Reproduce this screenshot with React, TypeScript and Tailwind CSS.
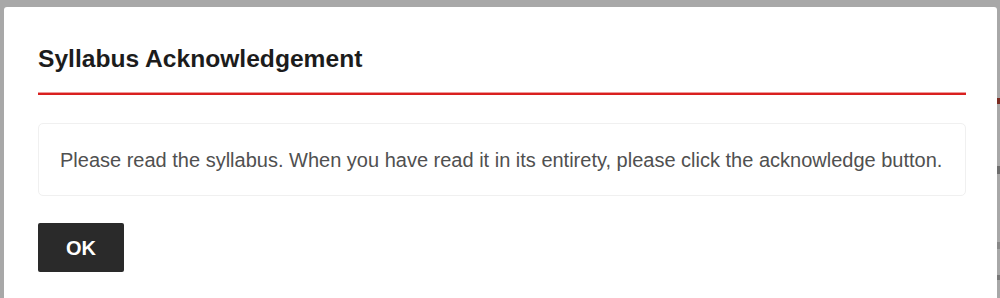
import React from "react";

export default function App() {
  return (
    <div className="w-[1000px] h-[298px] bg-[#a8a8a8] overflow-hidden flex pt-[7px] pl-[4px]" style={{ fontFamily: '"Liberation Sans", Arial, sans-serif' }}>
      <div className="flex-1 bg-white rounded-tl-[3px] rounded-tr-[3px] pl-[34px] pr-[31px] pt-[37px]">
        <h2 className="text-[24.6px] leading-[30px] font-bold text-[#1c1c1c]">Syllabus Acknowledgement</h2>
        <div className="mt-[18px] h-[3px] bg-[#d9201f] border-t border-[#ef9a9a]" />
        <div className="mt-[28px] border border-[#f0f0f0] rounded-[5px] h-[73px] flex items-center pl-[21px]">
          <p className="text-[20px] text-[#505050] leading-none">Please read the syllabus. When you have read it in its entirety, please click the acknowledge button.</p>
        </div>
        <button className="mt-[27px] w-[86px] h-[49px] bg-[#2a2a2a] rounded-[2px] text-white font-bold text-[20px] flex items-center justify-center">OK</button>
      </div>
      <div className="w-[3px] flex flex-col">
        <div className="h-[91px]" />
        <div className="h-[6px] bg-[#7a2a20]" />
        <div className="h-[62px]" />
        <div className="h-[8px] bg-[#6d6d6d]" />
        <div className="h-[68px]" />
        <div className="h-[7px] bg-[#888]" />
        <div className="h-[26px]" />
        <div className="h-[5px] bg-[#777]" />
      </div>
    </div>
  );
}
